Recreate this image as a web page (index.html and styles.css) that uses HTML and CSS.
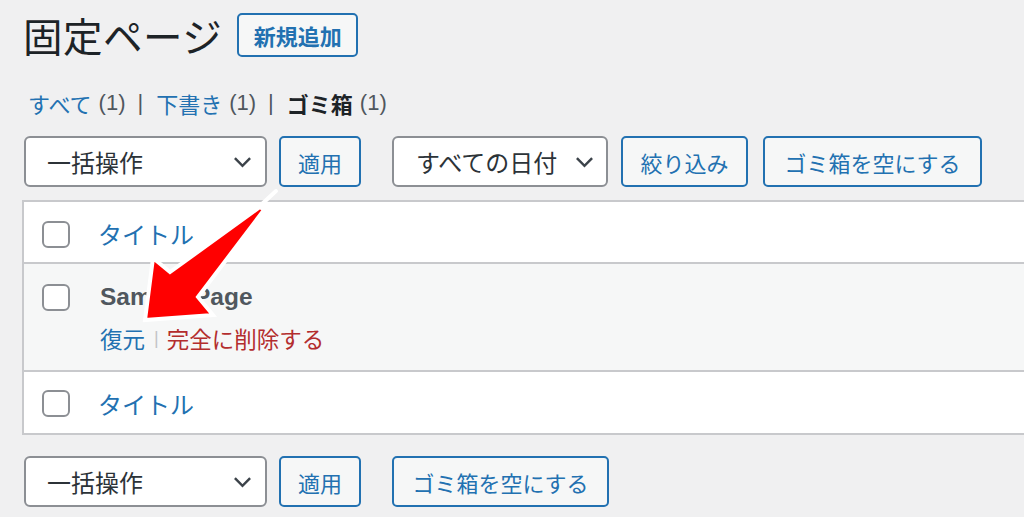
FILE: index.html
```html
<!DOCTYPE html>
<html lang="ja">
<head>
<meta charset="utf-8">
<title>固定ページ</title>
<link rel="stylesheet" href="styles.css">
</head>
<body>
<div class="wrap">
  <div class="header">
    <h1 class="title">固定ページ</h1>
    <a class="btn btn-add">新規追加</a>
  </div>

  <div class="subsubsub">
    <a class="link">すべて</a><span class="count">(1)</span><span class="sep">|</span><a class="link">下書き</a><span class="count">(1)</span><span class="sep">|</span><span class="current">ゴミ箱</span><span class="count">(1)</span>
  </div>

  <div class="tablenav tablenav-top">
    <div class="select select-bulk"><span>一括操作</span><svg class="chev" viewBox="0 0 20 12"><path d="M2 2 L10 10 L18 2" fill="none" stroke="#3c434a" stroke-width="2.6"/></svg></div>
    <a class="btn btn-apply">適用</a>
    <div class="select select-date"><span>すべての日付</span><svg class="chev" viewBox="0 0 20 12"><path d="M2 2 L10 10 L18 2" fill="none" stroke="#3c434a" stroke-width="2.6"/></svg></div>
    <a class="btn btn-filter">絞り込み</a>
    <a class="btn btn-empty">ゴミ箱を空にする</a>
  </div>

  <div class="table">
    <div class="row row-head">
      <span class="cb"></span>
      <a class="col-title">タイトル</a>
    </div>
    <div class="row row-item">
      <span class="cb"></span>
      <div class="item-body">
        <div class="item-title">Sample Page</div>
        <div class="row-actions"><a class="restore">復元</a><span class="act-sep">|</span><a class="delete">完全に削除する</a></div>
      </div>
    </div>
    <div class="row row-foot">
      <span class="cb"></span>
      <a class="col-title">タイトル</a>
    </div>
  </div>

  <div class="tablenav tablenav-bottom">
    <div class="select select-bulk"><span>一括操作</span><svg class="chev" viewBox="0 0 20 12"><path d="M2 2 L10 10 L18 2" fill="none" stroke="#3c434a" stroke-width="2.6"/></svg></div>
    <a class="btn btn-apply">適用</a>
    <a class="btn btn-empty2">ゴミ箱を空にする</a>
  </div>
</div>

<svg class="arrow" viewBox="0 0 1024 517" width="1024" height="517">
  <line x1="262" y1="204" x2="276" y2="191" stroke="#fff" stroke-width="4" stroke-linecap="round"/>
  <polygon points="260,207 170,272 153,258 145,320 213,315 198,297 264,210" fill="#ff0000" stroke="#ffffff" stroke-width="4" stroke-linejoin="miter"/>
</svg>
</body>
</html>
```

FILE: styles.css
```css
* { box-sizing: border-box; }

html, body {
  margin: 0;
  padding: 0;
  width: 1024px;
  height: 517px;
  overflow: hidden;
}

body {
  background: #f0f0f1;
  font-family: "Liberation Sans", "Noto Sans CJK JP", sans-serif;
  color: #3c434a;
  position: relative;
}

.wrap {
  padding-left: 22px;
}

.header {
  display: flex;
  align-items: center;
  margin-top: 13px;
  height: 44px;
  padding-left: 1px;
}

.title {
  margin: 0;
  font-family: "Noto Sans CJK JP", sans-serif;
  font-weight: 400;
  font-size: 39.5px;
  line-height: 44px;
  color: #1d2327;
  letter-spacing: 0.5px;
}

.btn {
  display: flex;
  align-items: center;
  justify-content: center;
  border: 2px solid #2271b1;
  border-radius: 5px;
  background: #f6f7f7;
  color: #2271b1;
  font-family: "Noto Sans CJK JP", sans-serif;
  font-size: 22px;
  height: 51px;
}

.btn-add {
  margin-left: 15px;
  width: 121px;
  height: 44px;
  font-weight: 700;
}

.subsubsub {
  margin-top: 31px;
  height: 30px;
  display: flex;
  align-items: center;
  font-size: 22px;
  padding-left: 6px;
  font-family: "Noto Sans CJK JP", sans-serif;
}

.subsubsub .link { color: #2271b1; }
.subsubsub .current { color: #1d2327; font-weight: 700; }
.subsubsub .count {
  color: #50575e;
  font-family: "Liberation Sans", sans-serif;
  margin-left: 7px;
}
.subsubsub .sep {
  color: #50575e;
  font-family: "Liberation Sans", sans-serif;
  margin: 0 13px 0 12px;
}

.tablenav {
  display: flex;
  align-items: center;
  padding-left: 2px;
  height: 51px;
}

.tablenav-top { margin-top: 18px; }
.tablenav-bottom { margin-top: 21px; }

.select {
  display: flex;
  align-items: center;
  justify-content: space-between;
  height: 51px;
  background: #fff;
  border: 2px solid #8c8f94;
  border-radius: 6px;
  font-family: "Noto Sans CJK JP", sans-serif;
  font-size: 24px;
  color: #2c3338;
}

.select-bulk {
  width: 243px;
  padding: 0 13px 0 21px;
}

.select-date {
  width: 216px;
  margin-left: 31px;
  padding: 0 12px 0 22px;
}

.chev {
  width: 19px;
  height: 12px;
}

.btn-apply {
  width: 82px;
  margin-left: 12px;
}

.btn-filter {
  width: 127px;
  margin-left: 13px;
}

.btn-empty {
  width: 219px;
  margin-left: 15px;
}

.btn-empty2 {
  width: 217px;
  margin-left: 31px;
}

.table {
  margin-top: 13px;
  width: 1040px;
  background: #fff;
  border: 2px solid #c8c9cc;
}

.row {
  display: flex;
  align-items: center;
  padding-left: 18px;
}

.row-head {
  height: 62px;
  border-bottom: 2px solid #c8c9cc;
  padding-top: 4px;
}

.row-item {
  height: 108px;
  background: #f6f7f7;
  border-bottom: 2px solid #c8c9cc;
  align-items: flex-start;
  padding-top: 20px;
}

.row-foot {
  height: 61px;
  padding-top: 2px;
}

.cb {
  display: block;
  width: 28px;
  height: 27px;
  border: 2px solid #8c8f94;
  border-radius: 6px;
  background: #fff;
  flex: none;
}

.col-title {
  margin-left: 28px;
  font-family: "Noto Sans CJK JP", sans-serif;
  font-size: 24px;
  color: #2271b1;
  line-height: 30px;
}

.item-body {
  margin-left: 30px;
  display: flex;
  flex-direction: column;
}

.item-title {
  font-family: "Liberation Sans", sans-serif;
  font-weight: 700;
  font-size: 24.5px;
  line-height: 26px;
  color: #50575e;
}

.row-actions {
  margin-top: 14px;
  display: flex;
  align-items: center;
  font-family: "Noto Sans CJK JP", sans-serif;
  font-size: 22.5px;
  line-height: 28px;
}

.restore { color: #2271b1; }
.delete { color: #b32d2e; }
.act-sep {
  color: #c3c4c7;
  font-family: "Liberation Sans", sans-serif;
  font-size: 18px;
  margin: 0 8px 0 9px;
}

.arrow {
  position: absolute;
  top: 0;
  left: 0;
  pointer-events: none;
}
```
